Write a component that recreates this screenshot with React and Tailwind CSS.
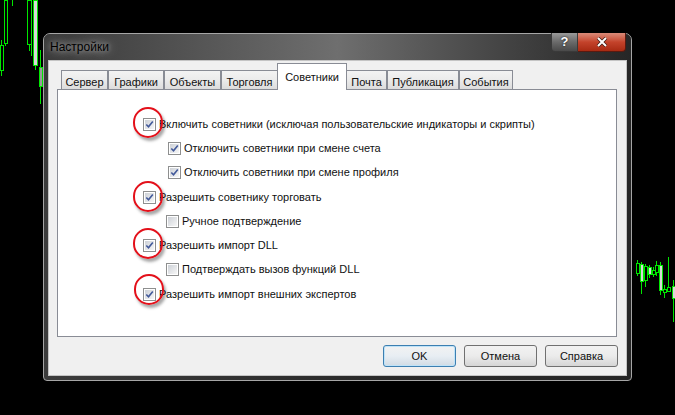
import React from 'react';

const leftCandles = [
  { x: 0, w: 3, top: 45, bot: 70, wt: 40, wb: 76 },
  { x: 3.5, w: 3, top: 0, bot: 43, wt: 0, wb: 46 },
  { x: 27, w: 4, top: 0, bot: 44, wt: 0, wb: 51 },
  { x: 33, w: 4, top: 0, bot: 65, wt: 0, wb: 70, fill: '#d8d8d8' },
  { x: 39, w: 3, top: 67, bot: 86, wt: 50, wb: 104, fill: '#9a9a9a' },
];

const rightCandles = [
  { x: 636, w: 3, top: 263, bot: 273, wt: 260, wb: 276 },
  { x: 640, w: 3, top: 264, bot: 281, wt: 262, wb: 294, fill: '#d8d8d8' },
  { x: 644, w: 3, top: 266, bot: 280, wt: 264, wb: 287 },
  { x: 648, w: 3, top: 267, bot: 274, wt: 265, wb: 278, fill: '#d8d8d8' },
  { x: 652, w: 3, top: 270, bot: 274, wt: 267, wb: 277 },
  { x: 655, w: 3, top: 265, bot: 272, wt: 261, wb: 276 },
  { x: 659, w: 3, top: 265, bot: 290, wt: 262, wb: 295, fill: '#d8d8d8' },
  { x: 663, w: 3, top: 289, bot: 292, wt: 285, wb: 298 },
  { x: 667, w: 3, top: 287, bot: 291, wt: 257, wb: 291 },
  { x: 672, w: 3, top: 286, bot: 298, wt: 280, wb: 322, fill: '#d8d8d8' },
];

function Chart() {
  const all = [...leftCandles, ...rightCandles];
  return (
    <svg className="absolute inset-0" width="675" height="415" viewBox="0 0 675 415">
      {all.map((c, i) => (
        <g key={i} stroke="#00e600" strokeWidth="1" shapeRendering="crispEdges">
          <line x1={c.x + c.w / 2} y1={c.wt} x2={c.x + c.w / 2} y2={c.top} />
          <line x1={c.x + c.w / 2} y1={c.bot} x2={c.x + c.w / 2} y2={c.wb} />
          <rect x={c.x + 0.5} y={c.top + 0.5} width={c.w} height={c.bot - c.top} fill={c.fill || '#000'} />
        </g>
      ))}
      <g stroke="#00e600" strokeWidth="1" shapeRendering="crispEdges">
        <line x1="7.5" y1="0" x2="7.5" y2="17" />
        <line x1="12.5" y1="0" x2="12.5" y2="6" />
        <line x1="31.5" y1="44" x2="31.5" y2="56" />
      </g>
    </svg>
  );
}

function CheckBox({ checked }) {
  return (
    <span className="w-[13px] h-[13px] shrink-0 border border-[#8e8f8f] bg-white p-px">
      <span className="block w-full h-full bg-gradient-to-br from-[#cdd1d7] to-[#f7f7f7] relative">
        {checked && (
          <svg className="absolute -left-px -top-px" width="11" height="11" viewBox="0 0 11 11">
            <path d="M2.3 5.5 L4.5 7.8 L8.8 2.5" fill="none" stroke="#42599a" strokeWidth="1.6" />
          </svg>
        )}
      </span>
    </span>
  );
}

const rows = [
  { text: 'Включить советники (исключая пользовательские индикаторы и скрипты)', checked: true, pl: 'pl-[85px]' },
  { text: 'Отключить советники при смене счета', checked: true, pl: 'pl-[110px]' },
  { text: 'Отключить советники при смене профиля', checked: true, pl: 'pl-[110px]' },
  { text: 'Разрешить советнику торговать', checked: true, pl: 'pl-[85px]' },
  { text: 'Ручное подтверждение', checked: false, pl: 'pl-[108px]' },
  { text: 'Разрешить импорт DLL', checked: true, pl: 'pl-[85px]' },
  { text: 'Подтверждать вызов функций DLL', checked: false, pl: 'pl-[108px]' },
  { text: 'Разрешить импорт внешних экспертов', checked: true, pl: 'pl-[85px]' },
];

const tabs = [
  ['Сервер', 'w-[47px]'],
  ['Графики', 'w-[56px]'],
  ['Объекты', 'w-[57px]'],
  ['Торговля', 'w-[57px]'],
  ['Советники', 'w-[70px]', true],
  ['Почта', 'w-[41px]'],
  ['Публикация', 'w-[72px]'],
  ['События', 'w-[54px]'],
];

const circles = [
  'left-[133px] top-[107px]',
  'left-[133px] top-[181px]',
  'left-[133px] top-[228px]',
  'left-[134px] top-[274px]',
];

export default function App() {
  return (
    <div className="relative w-[675px] h-[415px] bg-black overflow-hidden font-['Liberation_Sans',Arial,sans-serif] text-[11px] text-[#111]">
      <Chart />

      {/* window */}
      <div className="absolute left-[43px] top-[33px] w-[589px] h-[348px] flex flex-col rounded-t-[7px] rounded-b-[4px] border border-[#a6a6a6] bg-gradient-to-r from-[#3c3c3c] via-[#2c2c2c] to-[#262626]">
        <div className="absolute inset-x-0 top-0 h-[60px] rounded-t-[6px] bg-gradient-to-r from-[#3a3a3a] via-[#767676] to-[#262626] opacity-90" />
        <div className="relative h-[26px] flex items-center pl-[6px]">
          <span className="text-[12px] text-black [text-shadow:0_0_6px_rgba(255,255,255,0.7),0_0_14px_rgba(255,255,255,0.45)]">Настройки</span>
        </div>
        <div className="absolute -top-px right-[5px] flex">
          <div className="w-[27px] h-[19px] rounded-bl-[4px] border border-[#3a3a3a] border-t-0 bg-gradient-to-b from-[#9a9a9a] via-[#6a6a6a] to-[#4a4a4a] flex items-center justify-center text-white font-bold text-[13px] [text-shadow:0_0_2px_#000]">?</div>
          <div className="w-[48px] h-[19px] rounded-br-[4px] border border-[#5a1a10] border-t-0 border-l-0 bg-gradient-to-b from-[#d98a78] via-[#c4432b] to-[#a82a12] flex items-center justify-center">
            <svg width="12" height="10" viewBox="0 0 12 10">
              <path d="M2 1 L10 9 M10 1 L2 9" stroke="#3a1a14" strokeWidth="3.4" />
              <path d="M2 1 L10 9 M10 1 L2 9" stroke="#ffffff" strokeWidth="2" />
            </svg>
          </div>
        </div>

        {/* client */}
        <div className="relative mx-[4px] mb-[4px] flex-1 border border-[#c4c4c4] bg-[#f0f0f0] flex flex-col pt-[2px] px-[8px]">
          <div className="h-[26px] flex items-end pl-[4px]">
            {tabs.map(([name, w, sel]) =>
              sel ? (
                <div key={name} className={`${w} -ml-[1px] -mr-[1px] h-[27px] -mb-px relative z-10 bg-white border border-b-0 border-[#898c95] flex justify-center pt-[5px]`}>
                  {name}
                </div>
              ) : (
                <div key={name} className={`${w} h-[19px] border border-b-0 border-[#898c95] bg-gradient-to-b from-[#f3f3f3] via-[#ebebeb] to-[#dcdcdc] flex justify-center pt-[3px]`}>
                  {name}
                </div>
              )
            )}
          </div>
          <div className="h-[248px] w-[560px] border border-[#898c95] bg-white pt-[22px]">
            {rows.map((r) => (
              <div key={r.text} className={`h-[24.3px] flex items-center gap-[3px] ${r.pl}`}>
                <CheckBox checked={r.checked} />
                <span className="whitespace-nowrap leading-none">{r.text}</span>
              </div>
            ))}
          </div>
          <div className="flex justify-end gap-[8px] mt-[8px] w-[561px]">
            <button className="w-[73px] h-[22px] rounded-[3px] border border-[#3c7fb1] bg-gradient-to-b from-[#f2f2f2] via-[#e8eef3] to-[#d0dbe4] shadow-[inset_0_0_0_1px_#bfe3f8] font-normal">OK</button>
            <button className="w-[73px] h-[22px] rounded-[3px] border border-[#707070] bg-gradient-to-b from-[#f2f2f2] via-[#ebebeb] to-[#d5d5d5] font-normal">Отмена</button>
            <button className="w-[73px] h-[22px] rounded-[3px] border border-[#707070] bg-gradient-to-b from-[#f2f2f2] via-[#ebebeb] to-[#d5d5d5] font-normal">Справка</button>
          </div>
        </div>
      </div>

      {circles.map((c) => (
        <div key={c} className={`absolute ${c} w-[30px] h-[31px] rounded-full border-2 border-[#e3101a] shadow-[2px_3px_3px_rgba(0,0,0,0.35)]`} />
      ))}
    </div>
  );
}
